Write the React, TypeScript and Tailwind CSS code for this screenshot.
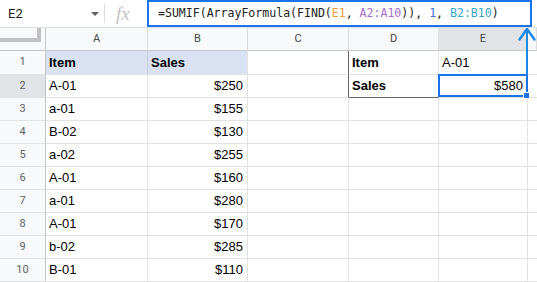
import React from 'react';

const ROWS: [string, string, string, string][] = [
  ['Item', 'Sales', 'Item', 'A-01'],
  ['A-01', '$250', 'Sales', '$580'],
  ['a-01', '$155', '', ''],
  ['B-02', '$130', '', ''],
  ['a-02', '$255', '', ''],
  ['A-01', '$160', '', ''],
  ['a-01', '$280', '', ''],
  ['A-01', '$170', '', ''],
  ['b-02', '$285', '', ''],
  ['B-01', '$110', '', ''],
];

const COLS = ['A', 'B', 'C', 'D', 'E', ''];

const cellFont = { fontFamily: '"Liberation Sans", Arial, sans-serif' };
const uiFont = { fontFamily: 'Roboto, "Liberation Sans", sans-serif' };

export default function App() {
  return (
    <div className="relative w-[537px] h-[282px] overflow-hidden bg-white text-black">
      {/* formula bar */}
      <div className="flex h-[28px] items-stretch border-b border-[#e1e1e1]" style={uiFont}>
        <div className="flex w-[104px] items-center justify-between pl-2 pr-[5px]">
          <span className="text-[13px] text-[#202124]">E2</span>
          <span className="mt-[1px] h-0 w-0 border-x-[4px] border-t-[4px] border-x-transparent border-t-[#5f6368]" />
        </div>
        <div className="my-[4px] w-px bg-[#dadce0]" />
        <div className="flex w-[42px] items-center pl-[11px]">
          <span className="text-[19px] italic leading-none text-[#c4c4c4]" style={{ fontFamily: '"Liberation Serif", serif' }}>fx</span>
        </div>
        <div className="flex w-[385px] items-center border-2 border-[#1a73e8] pl-[9px] text-[11.55px] text-[#222]" style={{ fontFamily: '"DejaVu Sans Mono", monospace' }}>
          <span className="whitespace-pre">
            =SUMIF(ArrayFormula(FIND(<span className="text-[#f29b38]">E1</span>, <span className="text-[#a56ccc]">A2:A10</span>)), <span className="text-[#3c73d6]">1</span>, <span className="text-[#35a7c9]">B2:B10</span>)
          </span>
        </div>
      </div>

      {/* sheet grid */}
      <div className="grid grid-cols-[46px_102px_100px_101px_90px_89px_1fr]">
        {/* header row */}
        <div className="flex h-[23px] flex-col bg-[#f8f9fa] border-r border-b border-[#c4c7c5]">
          <div className="h-[14px] w-[41px] border-r-4 border-b-4 border-[#c0c0c0]" />
        </div>
        {COLS.map((c, i) => (
          <div
            key={c + i}
            className={`flex h-[23px] items-center justify-center border-b border-r border-b-[#c4c7c5] border-r-[#dcdcdc] text-[11px] text-[#444746] ${c === 'E' ? 'bg-[#e1e3e6]' : 'bg-[#f8f9fa]'}`}
            style={uiFont}
          >
            {c}
          </div>
        ))}

        {ROWS.map((r, i) => {
          const n = i + 1;
          const h = n === 1 ? 'h-[24px]' : 'h-[23px]';
          const head = n === 1;
          return (
            <React.Fragment key={n}>
              <div
                className={`flex ${h} items-center justify-center border-b border-r border-b-[#e2e2e3] border-r-[#c4c7c5] text-[11px] text-[#5f6368] ${n === 2 ? 'bg-[#e1e3e6]' : 'bg-[#f8f9fa]'}`}
                style={uiFont}
              >
                {n}
              </div>
              <div className={`flex ${h} items-center border-b border-r border-[#e2e2e3] pl-[3px] text-[13px] ${head ? 'bg-[#d9e1f2] font-bold border-r-[#c9cfdc]' : ''}`} style={cellFont}>
                {r[0]}
              </div>
              <div className={`flex ${h} items-center justify-end border-b border-r border-[#e2e2e3] pr-[4px] text-[13px] ${head ? 'bg-[#d9e1f2] font-bold justify-start pl-[3px]' : ''}`} style={cellFont}>
                {r[1]}
              </div>
              <div className={`${h} border-b border-r border-[#e2e2e3] ${n <= 2 ? 'border-r-[#666]' : ''}`} />
              <div className={`flex ${h} items-center border-b border-r border-[#e2e2e3] pl-[3px] text-[13px] ${n <= 2 ? 'font-bold' : ''} ${n === 2 ? 'border-b-[#666]' : ''}`} style={cellFont}>
                {r[2]}
              </div>
              <div className={`relative flex ${h} items-center border-b border-r border-[#e2e2e3] text-[13px] ${n === 2 ? 'justify-end pr-[4px]' : 'pl-[3px]'}`} style={cellFont}>
                {r[3]}
                {n === 2 && (
                  <div className="absolute -left-[1px] -top-[1px] -right-[1px] bottom-0 border-2 border-[#1a73e8]">
                    <div className="absolute -right-[4px] -bottom-[4px] h-[7px] w-[7px] bg-[#1a73e8] border border-white" />
                  </div>
                )}
              </div>
              <div className={`${h} border-b border-[#e2e2e3]`} />
            </React.Fragment>
          );
        })}
      </div>

      {/* arrow from E2 to the formula */}
      <svg className="absolute left-[516px] top-[26px]" width="22" height="50" viewBox="0 0 22 50" fill="none">
        <path d="M11 3 V49" stroke="#1e88e5" strokeWidth="2" />
        <path d="M3.5 13.5 L11 3 L18.5 13.5" stroke="#1e88e5" strokeWidth="2.5" strokeLinecap="round" strokeLinejoin="round" />
      </svg>
    </div>
  );
}
